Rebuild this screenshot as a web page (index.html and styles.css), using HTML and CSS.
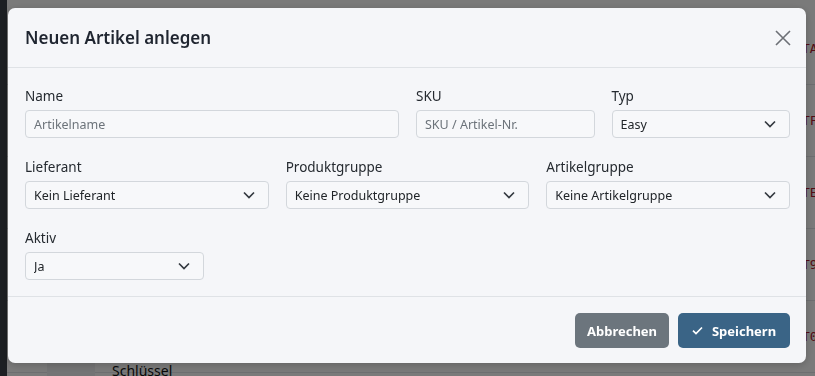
FILE: index.html
```html
<!DOCTYPE html>
<html lang="de">
<head>
    <meta charset="UTF-8">
    <meta name="viewport" content="width=device-width, initial-scale=1.0">
    <title>Artikel</title>
    <link rel="stylesheet" href="styles.css">
</head>
<body>
    <div class="page">
        <div class="sidebar"></div>
        <div class="content">
            <div class="row"><span class="thumb"></span><span class="name"></span><span class="code">TA-1001</span></div>
            <div class="row"><span class="thumb"></span><span class="name"></span><span class="code">TF-1002</span></div>
            <div class="row"><span class="thumb"></span><span class="name"></span><span class="code">TE-1003</span></div>
            <div class="row"><span class="thumb"></span><span class="name"></span><span class="code">T9-1004</span></div>
            <div class="row last"><span class="thumb"></span><span class="name">Schlüssel</span><span class="code">T0-1005</span></div>
        </div>
    </div>

    <div class="backdrop"></div>

    <div class="modal">
        <div class="modal-header">
            <h5 class="modal-title">Neuen Artikel anlegen</h5>
            <button class="btn-close" type="button">
                <svg width="16" height="16" viewBox="0 0 16 16"><path d="M1 1L15 15M15 1L1 15" stroke="#6d7076" stroke-width="1.6" fill="none"/></svg>
            </button>
        </div>
        <form class="modal-body">
            <div class="field col-6">
                <label>Name</label>
                <input type="text" placeholder="Artikelname">
            </div>
            <div class="field col-3">
                <label>SKU</label>
                <input type="text" placeholder="SKU / Artikel-Nr.">
            </div>
            <div class="field col-3">
                <label>Typ</label>
                <div class="select-wrap">
                    <select><option>Easy</option><option>Standard</option></select>
                    <svg class="chevron" width="12" height="8" viewBox="0 0 12 8"><path d="M1 1.5L6 6.5L11 1.5" stroke="#343a40" stroke-width="1.7" fill="none"/></svg>
                </div>
            </div>

            <div class="field col-4">
                <label>Lieferant</label>
                <div class="select-wrap">
                    <select><option>Kein Lieferant</option></select>
                    <svg class="chevron" width="12" height="8" viewBox="0 0 12 8"><path d="M1 1.5L6 6.5L11 1.5" stroke="#343a40" stroke-width="1.7" fill="none"/></svg>
                </div>
            </div>
            <div class="field col-4">
                <label>Produktgruppe</label>
                <div class="select-wrap">
                    <select><option>Keine Produktgruppe</option></select>
                    <svg class="chevron" width="12" height="8" viewBox="0 0 12 8"><path d="M1 1.5L6 6.5L11 1.5" stroke="#343a40" stroke-width="1.7" fill="none"/></svg>
                </div>
            </div>
            <div class="field col-4">
                <label>Artikelgruppe</label>
                <div class="select-wrap">
                    <select><option>Keine Artikelgruppe</option></select>
                    <svg class="chevron" width="12" height="8" viewBox="0 0 12 8"><path d="M1 1.5L6 6.5L11 1.5" stroke="#343a40" stroke-width="1.7" fill="none"/></svg>
                </div>
            </div>

            <div class="field col-3">
                <label>Aktiv</label>
                <div class="select-wrap">
                    <select><option>Ja</option><option>Nein</option></select>
                    <svg class="chevron" width="12" height="8" viewBox="0 0 12 8"><path d="M1 1.5L6 6.5L11 1.5" stroke="#343a40" stroke-width="1.7" fill="none"/></svg>
                </div>
            </div>
        </form>
        <div class="modal-footer">
            <button class="btn btn-secondary" type="button">Abbrechen</button>
            <button class="btn btn-primary" type="button">
                <svg width="11" height="9" viewBox="0 0 11 9"><path d="M1 4.6L4 7.5L10 1.5" stroke="#fff" stroke-width="1.7" fill="none"/></svg>
                Speichern
            </button>
        </div>
    </div>
</body>
</html>
```

FILE: styles.css
```css
* {
    box-sizing: border-box;
}
body {
    margin: 0;
    font-family: "Noto Sans", sans-serif;
    color: #212529;
    background-color: #fff;
    overflow: hidden;
}

/* page behind the dialog */
.page {
    display: flex;
    height: 376px;
}
.sidebar {
    width: 7px;
    flex-shrink: 0;
    background-color: #3c4249;
}
.content {
    flex: 1;
    padding-top: 13px;
    overflow: hidden;
}
.row {
    display: flex;
    align-items: center;
    height: 72px;
    border-bottom: 1px solid #e4e6ea;
    font-size: 14px;
}
.thumb {
    flex-shrink: 0;
    width: 48px;
    height: 40px;
    margin-left: 40px;
    background-color: #f1f2f4;
}
.name {
    flex-shrink: 0;
    margin-left: 17px;
    width: 690px;
    color: #111;
}
.row.last .thumb {
    align-self: flex-end;
    margin-bottom: -12px;
}
.row.last .name {
    align-self: flex-end;
    margin-bottom: -8px;
}
.code {
    flex-shrink: 0;
    font-family: "DejaVu Sans Mono", monospace;
    font-size: 13px;
    color: #b01c2e;
}

.backdrop {
    position: fixed;
    inset: 0;
    background-color: rgba(0, 0, 0, 0.52);
}

/* dialog */
.modal {
    position: fixed;
    top: 8px;
    left: 8px;
    width: 798px;
    background-color: #f5f6f9;
    border-radius: 7px;
    box-shadow: rgba(0, 0, 0, 0.2) 0px 2px 8px;
}
.modal-header {
    display: flex;
    align-items: center;
    justify-content: space-between;
    padding: 16px 15px 16px 17px;
    border-bottom: 1px solid #dfe2e6;
}
.modal-title {
    margin: 0;
    font-size: 17px;
    font-weight: 600;
    line-height: 27px;
    color: #1f2530;
}
.btn-close {
    display: flex;
    padding: 0;
    border: none;
    background: none;
}

.modal-body {
    display: grid;
    grid-template-columns: repeat(12, 1fr);
    column-gap: 17px;
    row-gap: 19px;
    margin: 0;
    padding: 18px 16px 16px 17px;
}
.col-3 {
    grid-column: span 3;
}
.col-4 {
    grid-column: span 4;
}
.col-6 {
    grid-column: span 6;
}
.field label {
    display: block;
    font-size: 13.5px;
    line-height: 21px;
    margin-bottom: 3px;
    color: #252a30;
}
.field input,
.field select {
    display: block;
    width: 100%;
    height: 28px;
    padding: 0 8px;
    border: 1px solid #d3d7dc;
    border-radius: 4px;
    background-color: #f7f8fa;
    font-family: "Noto Sans", sans-serif;
    font-size: 12.5px;
    color: #212529;
}
.field input::placeholder {
    color: #6c737a;
}
.field select {
    appearance: none;
    -webkit-appearance: none;
}
.select-wrap {
    position: relative;
}
.chevron {
    position: absolute;
    right: 14px;
    top: 10px;
    pointer-events: none;
}

.modal-footer {
    display: flex;
    justify-content: flex-end;
    gap: 9px;
    padding: 16px 16px 15px 16px;
    border-top: 1px solid #dfe2e6;
}
.btn {
    display: flex;
    align-items: center;
    gap: 9px;
    height: 35px;
    padding: 0 13px;
    border: none;
    border-radius: 5px;
    font-family: "Noto Sans", sans-serif;
    font-size: 13px;
    font-weight: 700;
    color: #fff;
}
.btn-secondary {
    width: 94px;
    justify-content: center;
    background-color: #6c757d;
}
.btn-primary {
    width: 112px;
    justify-content: center;
    background-color: #3a6486;
}
```
